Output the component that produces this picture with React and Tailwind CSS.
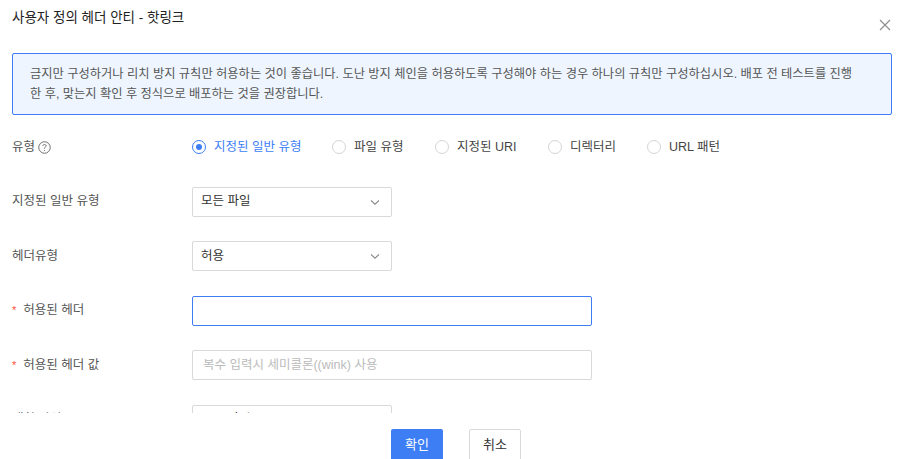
import { useState } from 'react';

const FONT = { fontFamily: '"Liberation Sans", "Noto Sans CJK KR", sans-serif' };

const typeOptions = ['지정된 일반 유형', '파일 유형', '지정된 URI', '디렉터리', 'URL 패턴'];

const Chevron = () => (
  <svg width="12" height="12" viewBox="0 0 12 12" fill="none" className="text-[#8c8c8c]">
    <path d="M2 4.5L6 8.2L10 4.5" stroke="currentColor" strokeWidth="1.1" />
  </svg>
);

const Select = ({ value }) => (
  <div className="flex h-[30px] w-[200px] items-center justify-between rounded-[2px] border border-[#d9d9d9] bg-white pl-2 pr-[10px] text-[12.5px] text-[#333]">
    <span>{value}</span>
    <Chevron />
  </div>
);

const Label = ({ children, required }) => (
  <div className="flex w-[180px] shrink-0 items-center text-[12.5px] text-[#555]">
    {required && <span className="mr-[7px] text-[11px] text-[#f5503b]">*</span>}
    {children}
  </div>
);

const App = () => {
  const [type, setType] = useState(0);
  const [header, setHeader] = useState('');
  const [headerValue, setHeaderValue] = useState('');

  return (
    <div className="flex h-[459px] w-[904px] flex-col overflow-hidden bg-white" style={FONT}>
      {/* Header */}
      <div className="flex h-[53px] shrink-0 items-start justify-between px-3">
        <h2 className="pt-2 text-[13.5px] leading-5 text-[#222]">사용자 정의 헤더 안티 - 핫링크</h2>
        <button className="mr-[1px] mt-[19px] text-[#8c8c8c]">
          <svg width="12" height="12" viewBox="0 0 12 12" fill="none">
            <path d="M1 1L11 11M11 1L1 11" stroke="currentColor" strokeWidth="1.1" />
          </svg>
        </button>
      </div>

      {/* Body */}
      <div className="h-[360px] shrink-0 overflow-hidden px-3">
        <div className="rounded-[2px] border border-[#3d7ef5] bg-[#eef5ff] px-[17px] pb-[10px] pt-[10px] text-[12.25px] leading-5 text-[#555]">
          금지만 구성하거나 리치 방지 규칙만 허용하는 것이 좋습니다. 도난 방지 체인을 허용하도록 구성해야 하는 경우 하나의 규칙만 구성하십시오. 배포 전 테스트를 진행
          <br />
          한 후, 맞는지 확인 후 정식으로 배포하는 것을 권장합니다.
        </div>

        <div className="mt-[17px] flex flex-col gap-[24.5px]">
          {/* 유형 */}
          <div className="flex h-[30px] items-center">
            <Label>
              유형
              <svg width="13" height="13" viewBox="0 0 14 14" fill="none" className="ml-[3px] text-[#666]">
                <circle cx="7" cy="7" r="6.2" stroke="currentColor" strokeWidth="1" />
                <path d="M5.2 5.4C5.2 4.4 6 3.8 7 3.8C8 3.8 8.8 4.4 8.8 5.3C8.8 6.4 7 6.5 7 7.9V8.4" stroke="currentColor" strokeWidth="1" />
                <circle cx="7" cy="10.2" r="0.6" fill="currentColor" />
              </svg>
            </Label>
            <div className="flex items-center">
              {typeOptions.map((opt, i) => (
                <label
                  key={opt}
                  onClick={() => setType(i)}
                  className={`flex cursor-pointer items-center text-[12.5px] ${
                    i === 0 ? 'w-[140px]' : i === 1 ? 'w-[103px]' : i === 2 ? 'w-[113px]' : 'w-[99px]'
                  } ${type === i ? 'text-[#3d7ef5]' : 'text-[#444]'}`}
                >
                  <span
                    className={`mr-2 flex h-[14px] w-[14px] items-center justify-center rounded-full border bg-white ${
                      type === i ? 'border-[#3d7ef5]' : 'border-[#d4d4d4]'
                    }`}
                  >
                    {type === i && <span className="h-[6px] w-[6px] rounded-full bg-[#3d7ef5]" />}
                  </span>
                  {opt}
                </label>
              ))}
            </div>
          </div>

          {/* 지정된 일반 유형 */}
          <div className="flex h-[30px] items-center">
            <Label>지정된 일반 유형</Label>
            <Select value="모든 파일" />
          </div>

          {/* 헤더유형 */}
          <div className="flex h-[30px] items-center">
            <Label>헤더유형</Label>
            <Select value="허용" />
          </div>

          {/* 허용된 헤더 */}
          <div className="flex h-[30px] items-center">
            <Label required>허용된 헤더</Label>
            <input
              value={header}
              onChange={(e) => setHeader(e.target.value)}
              className="h-[30px] w-[400px] rounded-[2px] border border-[#3d7ef5] px-[10px] text-[12.5px] text-[#333] outline-none"
            />
          </div>

          {/* 허용된 헤더 값 */}
          <div className="flex h-[30px] items-center">
            <Label required>허용된 헤더 값</Label>
            <input
              value={headerValue}
              onChange={(e) => setHeaderValue(e.target.value)}
              placeholder="복수 입력시 세미콜론((wink) 사용"
              className="h-[30px] w-[400px] rounded-[2px] border border-[#d9d9d9] px-[10px] text-[12.5px] text-[#333] outline-none placeholder:text-[#bbb]"
            />
          </div>

          {/* 매칭 방식 (scrolled out of view) */}
          <div className="flex h-[30px] items-center">
            <Label>매칭 방식</Label>
            <Select value="모든 파일" />
          </div>
        </div>
      </div>

      {/* Footer */}
      <div className="flex justify-center gap-[26px] pl-2 pt-4">
        <button className="h-8 w-[52px] rounded-[2px] bg-[#3d7ef5] text-[13px] text-white">확인</button>
        <button className="h-8 w-[52px] rounded-[2px] border border-[#d9d9d9] bg-white text-[13px] text-[#333]">취소</button>
      </div>
    </div>
  );
};

export default App;
